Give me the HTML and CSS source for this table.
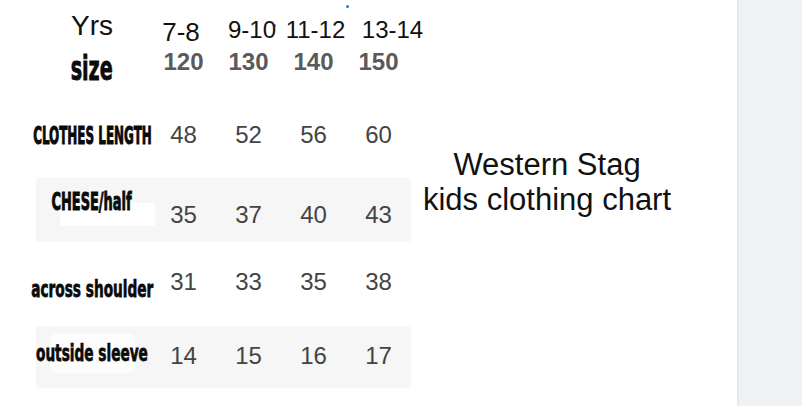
FILE: index.html
```html
<!DOCTYPE html>
<html lang="en">
<head>
<meta charset="utf-8">
<title>Western Stag kids clothing chart</title>
<link rel="stylesheet" href="styles.css">
</head>
<body>
<div class="page">
  <main class="main">
    <section class="chart">
      <span class="dot dot-a"></span>
      <span class="dot dot-b"></span>
      <div class="row row-years">
        <div class="label"><span class="yrs">Yrs</span></div>
        <div class="cell yr yr1">7-8</div>
        <div class="cell yr yr2">9-10</div>
        <div class="cell yr yr3">11-12</div>
        <div class="cell yr yr4">13-14</div>
      </div>
      <div class="row row-size">
        <div class="label"><span class="tag tag-size">size</span></div>
        <div class="cell sz">120</div>
        <div class="cell sz">130</div>
        <div class="cell sz">140</div>
        <div class="cell sz">150</div>
      </div>
      <div class="row row-length">
        <div class="label"><span class="tag tag-caps">CLOTHES LENGTH</span></div>
        <div class="cell num">48</div>
        <div class="cell num">52</div>
        <div class="cell num">56</div>
        <div class="cell num">60</div>
      </div>
      <div class="row row-chest shaded">
        <div class="label"><span class="tag tag-caps tag-short">CHESE/half</span></div>
        <div class="cell num">35</div>
        <div class="cell num">37</div>
        <div class="cell num">40</div>
        <div class="cell num">43</div>
      </div>
      <div class="row row-shoulder">
        <div class="label"><span class="tag tag-lower">across shoulder</span></div>
        <div class="cell num">31</div>
        <div class="cell num">33</div>
        <div class="cell num">35</div>
        <div class="cell num">38</div>
      </div>
      <div class="row row-sleeve shaded">
        <div class="label"><span class="tag tag-lower">outside sleeve</span></div>
        <div class="cell num">14</div>
        <div class="cell num">15</div>
        <div class="cell num">16</div>
        <div class="cell num">17</div>
      </div>
    </section>
    <h1 class="title">Western Stag<br>kids clothing chart</h1>
  </main>
  <aside class="side"></aside>
</div>
</body>
</html>
```
FILE: styles.css
```css
* { box-sizing: border-box; }
html, body { margin: 0; padding: 0; background: #ffffff; }
body { font-family: "Liberation Sans", Arial, sans-serif; color: #111; }

.page { display: flex; width: 802px; height: 406px; overflow: hidden; }
.main { width: 737px; flex: none; display: flex; align-items: flex-start; }
.side { flex: 1; background: #f0f1f5; border-left: 2px solid #e8e9ef; }

.chart { position: relative; padding-left: 36px; width: 411px; flex: none; }

.row { display: flex; align-items: flex-start; width: 375px; position: relative; }
.label { width: 115px; padding-right: 3px; flex: none; display: flex; justify-content: center; white-space: nowrap; position: relative; z-index: 1; }
.cell { width: 65px; flex: none; display: flex; justify-content: center; white-space: nowrap; font-size: 24px; line-height: 24px; }

.shaded { background: #f6f6f6; border-radius: 4px; }

/* header rows */
.row-years { height: 46px; }
.yrs { font-size: 28px; line-height: 28px; margin-top: 12px; color: #111; }
.yr { color: #111; padding-top: 18px; }
.yr1 { font-size: 26px; line-height: 26px; padding-top: 19px; padding-right: 5px; }
.yr2 { padding-left: 7px; }
.yr3 { padding-left: 4px; }
.yr4 { padding-left: 28px; }

.row-size { height: 54px; }
.sz { font-weight: 700; color: #5a5a5a; padding-top: 4px; }

/* condensed heavy labels */
.tag {
  display: inline-block;
  font-family: "DejaVu Sans Condensed", "DejaVu Sans", sans-serif;
  font-weight: 700;
  color: #0a0a0a;
  line-height: 1;
  transform-origin: 50% 85%;
  -webkit-text-stroke: 0.6px #0a0a0a;
}
.tag-caps { font-size: 16px; transform: scale(0.83, 1.55); }
.tag-short { transform: scale(0.9, 1.55); }
.tag-lower { font-size: 19px; transform: scale(0.8, 1.25); }
.tag-size { font-size: 26px; transform: scale(0.82, 1.3); margin-top: 12px; }

.num { color: #444; }

.row-length { height: 78px; }
.row-length .num { padding-top: 23px; }
.row-length .tag { margin-top: 31px; }

.row-chest { height: 64px; }
.row-chest .num { padding-top: 25px; }
.row-chest .tag { margin-top: 19px; }
.row-chest::before { content: ""; position: absolute; left: 24px; top: 25px; width: 95px; height: 23px; background: #fff; border-radius: 2px; }

.row-shoulder { height: 84px; }
.row-shoulder .num { padding-top: 28px; }
.row-shoulder .tag { margin-top: 39px; }

.row-sleeve { height: 62px; }
.row-sleeve .num { padding-top: 18px; }
.row-sleeve .tag { margin-top: 19px; }
.row-sleeve::before { content: ""; position: absolute; left: 14px; top: 7px; width: 85px; height: 40px; background: #fff; border-radius: 8px; opacity: 0.8; }

.dot { position: absolute; width: 3px; height: 3px; border-radius: 50%; background: #3a6fe0; }
.dot-a { left: 346px; top: 5px; }
.dot-b { left: 273px; top: 24px; }

.title {
  margin: 0;
  padding-top: 147px;
  width: 272px;
  flex: none;
  text-align: center;
  font-weight: 400;
  font-size: 31px;
  line-height: 35px;
  color: #111;
}
```
